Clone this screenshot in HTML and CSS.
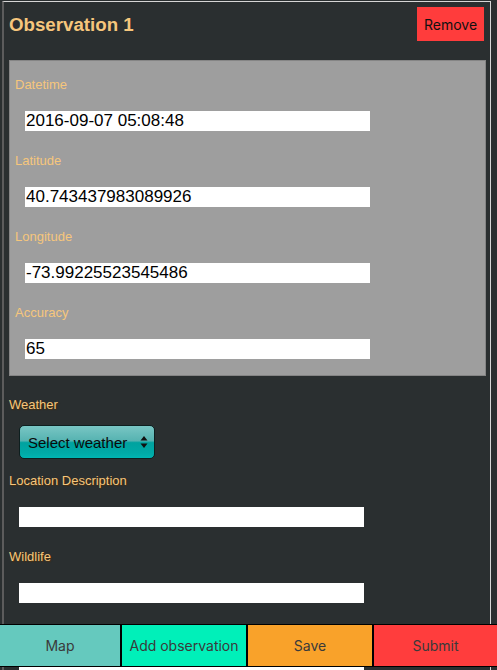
FILE: index.html
```html
<!DOCTYPE html>
<html>
<head>
<meta charset="utf-8">
<link rel="stylesheet" href="styles.css">
</head>
<body>
<div class="frame">
  <div class="header">
    <h1 class="title">Observation 1</h1>
    <button class="remove">Remove</button>
  </div>
  <div class="panel">
    <label class="plabel">Datetime</label>
    <input class="pinput" type="text" value="2016-09-07 05:08:48">
    <label class="plabel gap">Latitude</label>
    <input class="pinput" type="text" value="40.743437983089926">
    <label class="plabel gap">Longitude</label>
    <input class="pinput" type="text" value="-73.99225523545486">
    <label class="plabel gap">Accuracy</label>
    <input class="pinput" type="text" value="65">
  </div>
  <label class="olabel first">Weather</label>
  <div class="select">
    <span class="select-text">Select weather</span>
    <svg class="arrows" width="8" height="12" viewBox="0 0 8 12"><path d="M4 0 L7.5 4.5 L0.5 4.5 Z M4 12 L7.5 7.5 L0.5 7.5 Z" fill="#111"/></svg>
  </div>
  <label class="olabel after-select">Location Description</label>
  <input class="oinput" type="text">
  <label class="olabel">Wildlife</label>
  <input class="oinput" type="text">
  <label class="olabel">Notes</label>
  <input class="oinput" type="text">
</div>
<div class="bar">
  <button class="bbtn map">Map</button>
  <button class="bbtn add">Add observation</button>
  <button class="bbtn save">Save</button>
  <button class="bbtn submit">Submit</button>
</div>
</body>
</html>
```
FILE: styles.css
```css
html, body {
  margin: 0;
  padding: 0;
  background: #2a2f30;
}
body {
  font-family: "Liberation Sans", Arial, sans-serif;
}
.frame {
  margin: 1px 6px 0 2px;
  border-top: 1px solid #d6d6d6;
  border-left: 2px solid #5c5c5c;
  border-right: 1px solid #d6d6d6;
  padding: 0 4px 80px 5px;
  min-height: 700px;
}
.header {
  display: flex;
  justify-content: space-between;
  align-items: flex-start;
  padding-top: 5px;
  margin-bottom: 19px;
}
.title {
  margin: 7px 0 0 0;
  font-size: 18.7px;
  font-weight: bold;
  color: #f6c67c;
  line-height: normal;
}
.remove {
  margin: 0 2px 0 0;
  height: 34px;
  width: 67px;
  border: none;
  background: #ff3c3c;
  color: #111;
  font-family: Inter, "Noto Sans", sans-serif;
  font-size: 14px;
  padding: 0;
}
.panel {
  background: #9e9e9e;
  border: 1px solid #858585;
  padding: 16px 5px 16px 5px;
}
.plabel, .olabel {
  display: block;
  font-size: 13px;
  line-height: 15px;
  height: 15px;
  color: #f6c67c;
}
.plabel.gap {
  margin-top: 22px;
}
.pinput, .oinput {
  display: block;
  box-sizing: border-box;
  width: 345px;
  height: 20px;
  margin: 19px 0 0 10px;
  padding: 0 1px;
  border: none;
  outline: none;
  background: #fff;
  color: #000;
  font-family: "Liberation Sans", Arial, sans-serif;
  font-size: 17px;
}
.olabel {
  margin-top: 22px;
  text-shadow: 1px 1px 1px #4a3010;
}
.olabel.first {
  margin-top: 21px;
}
.olabel.after-select {
  margin-top: 14px;
}
.select {
  box-sizing: border-box;
  width: 136px;
  height: 34px;
  margin: 13px 0 0 10px;
  border: 1px solid #0d1f1f;
  border-radius: 5px;
  background: linear-gradient(#79c6c4 0%, #56b3b1 46%, #00a29f 52%, #00aaa7 85%, #00b5b2 100%);
  display: flex;
  align-items: center;
  justify-content: space-between;
  padding: 0 6px 0 8px;
}
.select-text {
  font-size: 15px;
  color: #0a0a0a;
}
.arrows {
  display: block;
}
.bar {
  position: fixed;
  left: 0;
  right: 0;
  bottom: 3px;
  height: 43px;
  box-sizing: border-box;
  border-top: 1px solid #000;
  border-bottom: 1px solid #000;
  background: #000;
  display: grid;
  grid-template-columns: 120px 124px 124px 1fr;
  column-gap: 2px;
}
.bbtn {
  border: none;
  margin: 0;
  padding: 0;
  font-family: Inter, "Noto Sans", sans-serif;
  font-size: 14px;
  color: #3a3a3a;
}
.map { background: #65c9be; }
.add { background: #00f0b9; }
.save { background: #f9a22a; }
.submit { background: #ff3d3d; }
```
